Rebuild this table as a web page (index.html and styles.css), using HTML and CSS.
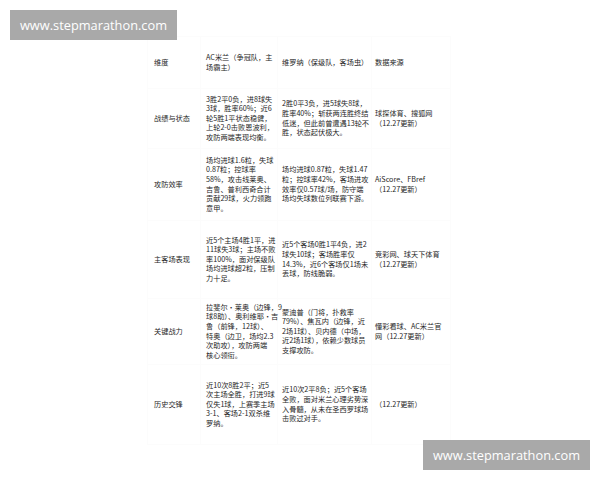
FILE: index.html
```html
<!DOCTYPE html>
<html lang="zh-CN">
<head>
<meta charset="utf-8">
<title>AC米兰 vs 维罗纳</title>
<link rel="stylesheet" href="styles.css">
</head>
<body>
<div class="page">
  <div class="mark mark-top">www.stepmarathon.com</div>
  <table class="cmp">
    <colgroup>
      <col class="c1"><col class="c2"><col class="c3"><col class="c4">
    </colgroup>
    <tr class="r0">
      <td>维度</td>
      <td>AC米兰（争冠队，主<br>场霸主）</td>
      <td>维罗纳（保级队，客场虫）</td>
      <td>数据来源</td>
    </tr>
    <tr class="r1">
      <td>战绩与状态</td>
      <td>3胜2平0负，进8球失<br>3球，胜率60%；近6<br>轮5胜1平状态稳健，<br>上轮2-0击败恩波利，<br>攻防两端表现均衡。</td>
      <td>2胜0平3负，进5球失8球，<br>胜率40%；斩获两连胜终结<br>低迷，但此前曾遭遇13轮不<br>胜，状态起伏极大。</td>
      <td>球探体育、搜狐网<br>（12.27更新）</td>
    </tr>
    <tr class="r2">
      <td>攻防效率</td>
      <td>场均进球1.6粒，失球<br>0.87粒；控球率<br>58%，攻击线莱奥、<br>吉鲁、普利西奇合计<br>贡献29球，火力领跑<br>意甲。</td>
      <td>场均进球0.87粒，失球1.47<br>粒；控球率42%，客场进攻<br>效率仅0.57球/场，防守端<br>场均失球数位列联赛下游。</td>
      <td>AiScore、FBref<br>（12.27更新）</td>
    </tr>
    <tr class="r3">
      <td>主客场表现</td>
      <td>近5个主场4胜1平，进<br>11球失3球；主场不败<br>率100%，面对保级队<br>场均进球超2粒，压制<br>力十足。</td>
      <td>近5个客场0胜1平4负，进2<br>球失10球；客场胜率仅<br>14.3%，近6个客场仅1场未<br>丢球，防线脆弱。</td>
      <td>竞彩网、球天下体育<br>（12.27更新）</td>
    </tr>
    <tr class="r4">
      <td>关键战力</td>
      <td>拉斐尔·莱奥（边锋，9<br>球8助）、奥利维耶·吉<br>鲁（前锋，12球）、<br>特奥（边卫，场均2.3<br>次助攻），攻防两端<br>核心领衔。</td>
      <td>蒙迪普（门将，扑救率<br>79%）、焦瓦内（边锋，近<br>2场1球）、贝内德（中场，<br>近2场1球），依赖少数球员<br>支撑攻防。</td>
      <td>懂彩看球、AC米兰官<br>网（12.27更新）</td>
    </tr>
    <tr class="r5">
      <td>历史交锋</td>
      <td>近10次8胜2平；近5<br>次主场全胜，打进9球<br>仅失1球，上赛季主场<br>3-1、客场2-1双杀维<br>罗纳。</td>
      <td>近10次2平8负；近5个客场<br>全败，面对米兰心理劣势深<br>入骨髓，从未在圣西罗球场<br>击败过对手。</td>
      <td>（12.27更新）</td>
    </tr>
  </table>
  <div class="mark mark-bottom">www.stepmarathon.com</div>
</div>
</body>
</html>
```

FILE: styles.css
```css
html, body {
  margin: 0;
  padding: 0;
  background: #ffffff;
}

.page {
  position: relative;
  width: 600px;
  height: 480px;
  overflow: hidden;
  padding: 36px 0 0 147px;
  box-sizing: border-box;
  font-family: "Noto Sans CJK SC", "Noto Sans", sans-serif;
}

.mark {
  position: absolute;
  background: #a9a9a9;
  color: #ffffff;
  font-family: "Open Sans", "DejaVu Sans", sans-serif;
  font-size: 12.8px;
  line-height: 30px;
  height: 30px;
  width: 167px;
  text-align: center;
}

.mark-top {
  left: 10px;
  top: 10px;
}

.mark-bottom {
  left: 423px;
  top: 440px;
}

.cmp {
  border-collapse: collapse;
  table-layout: fixed;
  width: 303px;
  color: #262626;
  font-size: 7.2px;
  line-height: 9.6px;
}

.c1 { width: 53px; }
.c2 { width: 77px; }
.c3 { width: 94px; }
.c4 { width: 79px; }

.cmp td {
  border: 1px solid #fcfcfc;
  padding: 0 0 0 5px;
  vertical-align: middle;
  white-space: nowrap;
}

.cmp td:first-child { padding-left: 6px; }
.cmp td:nth-child(3) { padding-left: 4px; }
.cmp td:nth-child(4) { padding-left: 3px; }

.r0 { height: 52px; }
.r1 { height: 60px; }
.r2 { height: 72px; }
.r3 { height: 78px; }
.r4 { height: 66px; }
.r5 { height: 80px; }
```
